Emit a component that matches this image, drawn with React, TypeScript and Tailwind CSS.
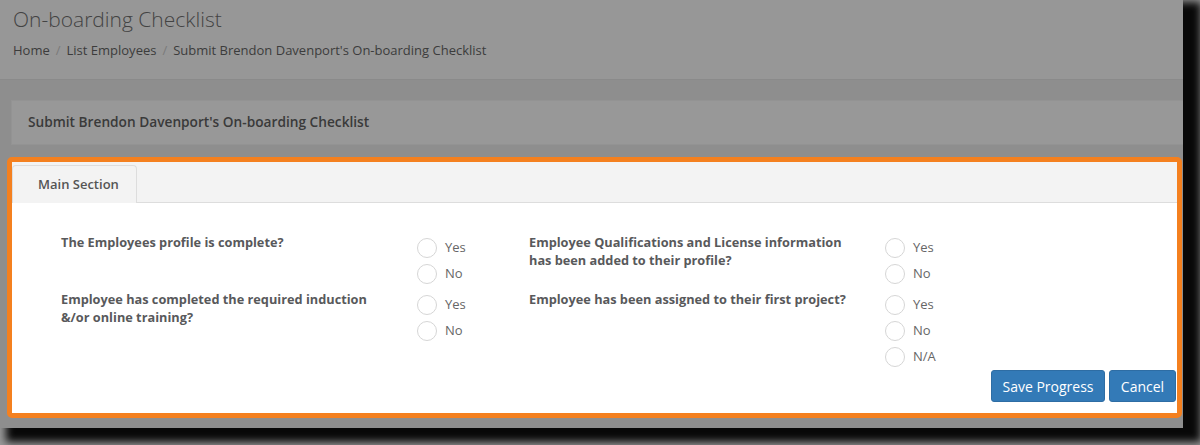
const questionsLeft = [
  { label: "The Employees profile is complete?", options: ["Yes", "No"] },
  { label: "Employee has completed the required induction &/or online training?", options: ["Yes", "No"] },
];

const questionsRight = [
  { label: "Employee Qualifications and License information has been added to their profile?", options: ["Yes", "No"] },
  { label: "Employee has been assigned to their first project?", options: ["Yes", "No", "N/A"] },
];

function Question({ label, options }: { label: string; options: string[] }) {
  return (
    <div className="flex">
      <div className="-mt-[2px] w-[356px] pr-[28px] text-[12.75px] font-bold leading-[18px] text-[#58595b]">
        {label}
      </div>
      <div className="flex flex-col">
        {options.map((opt) => (
          <label key={opt} className="flex h-[26px] items-center gap-[8px]">
            <span className="h-[20px] w-[20px] rounded-full border-[1.5px] border-[#d6d6d6] bg-white" />
            <span className="text-[13px] text-[#666]">{opt}</span>
          </label>
        ))}
      </div>
    </div>
  );
}

export default function App() {
  return (
    <div className="h-[445px] w-[1200px] overflow-hidden bg-[#9a9a9a] font-['Open_Sans',sans-serif]">
      <div className="h-[428px] w-[1183px] bg-[#8e8e8e] shadow-[12px_8px_8px_6px_rgba(0,0,0,0.95)]">
        {/* Page header (dimmed) */}
        <div className="border-b border-[#8a8a8a] bg-[#979797] px-[13px] pb-[19px] pt-[6px]">
          <h1 className="text-[21px] font-light leading-[27px] text-[#434343]">On-boarding Checklist</h1>
          <div className="mt-[7px] flex items-center text-[13px] leading-[20px] text-[#3c3c3c]">
            <span>Home</span>
            <span className="px-[6px] text-[#7a7a7a]">/</span>
            <span>List Employees</span>
            <span className="px-[6px] text-[#7a7a7a]">/</span>
            <span>Submit Brendon Davenport's On-boarding Checklist</span>
          </div>
        </div>

        <div className="pt-[20px]">
          <div className="ml-[11px] flex h-[45px] items-center border border-r-0 border-[#939393] bg-[#989898] pl-[16px]">
            <span className="text-[13.7px] font-semibold text-[#3a3a3a]">
              Submit Brendon Davenport's On-boarding Checklist
            </span>
          </div>

          {/* Highlighted form panel */}
          <div className="ml-[7px] mt-[12px] w-[1175px] overflow-hidden rounded-[5px] border-[5px] border-[#f4801f] bg-white">
            <div className="flex h-[41px] border-b border-[#dddddd] bg-[#f3f3f3]">
              <div className="-mb-px mt-[3px] flex w-[125px] items-center rounded-t-[4px] border border-b-0 border-[#dddddd] bg-[#f3f3f3] pl-[25px] text-[13px] font-semibold text-[#555]">
                Main Section
              </div>
            </div>

            <div className="pb-[11px] pl-[49px] pr-[1px] pt-[32px]">
              <div className="grid grid-cols-[468px_468px] gap-y-[5px]">
                <Question {...questionsLeft[0]} />
                <Question {...questionsRight[0]} />
                <Question {...questionsLeft[1]} />
                <Question {...questionsRight[1]} />
              </div>
              <div className="flex justify-end gap-[4px]">
                <button className="h-[32px] w-[114px] rounded-[3px] border border-[#2e6da4] bg-[#337ab7] text-[14px] text-white">
                  Save Progress
                </button>
                <button className="h-[32px] w-[67px] rounded-[3px] border border-[#2e6da4] bg-[#337ab7] text-[14px] text-white">
                  Cancel
                </button>
              </div>
            </div>
          </div>
        </div>
      </div>
    </div>
  );
}
